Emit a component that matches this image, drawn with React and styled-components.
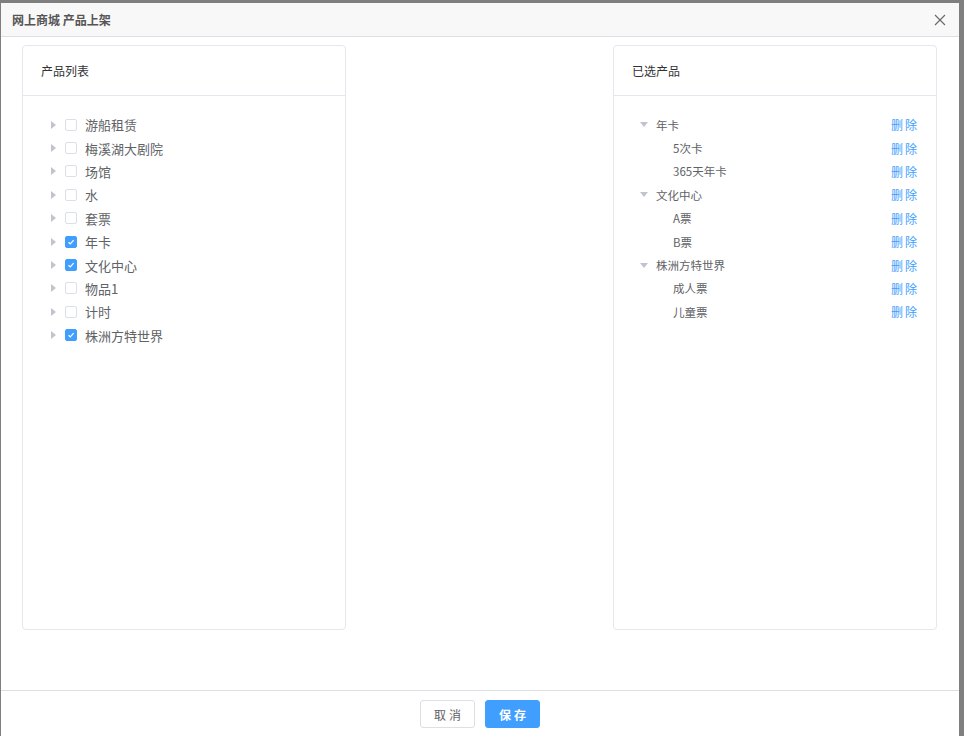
import React from "react";
import styled, { createGlobalStyle } from "styled-components";

const GlobalStyle = createGlobalStyle`
  html, body {
    margin: 0;
    padding: 0;
    background: #7f7f7f;
    overflow: hidden;
  }
  body {
    font-family: "Noto Sans CJK SC", "Noto Sans", "Liberation Sans", sans-serif;
  }
`;

const Overlay = styled.div`
  width: 964px;
  height: 736px;
  background: #7f7f7f;
  padding: 3px 0 0 1px;
  box-sizing: border-box;
  overflow: hidden;
`;

const Dialog = styled.div`
  width: 958px;
  height: 760px;
  background: #fff;
  display: flex;
  flex-direction: column;
`;

const Header = styled.div`
  height: 33px;
  flex: none;
  background: #f8f8f9;
  border-bottom: 1px solid #dcdfe6;
  display: flex;
  align-items: center;
  justify-content: space-between;
  padding: 0 12px 0 11px;
`;

const Title = styled.div`
  font-size: 12px;
  font-weight: bold;
  color: #555;
`;

const Close = styled.div`
  width: 12px;
  height: 12px;
  display: flex;
  margin-right: 1px;
  margin-top: 1px;
`;

const Body = styled.div`
  height: 653px;
  flex: none;
  box-sizing: border-box;
  padding: 8px 22px 0 21px;
  display: flex;
  justify-content: space-between;
  align-items: flex-start;
`;

const Panel = styled.div`
  width: 324px;
  height: 585px;
  box-sizing: border-box;
  border: 1px solid #e4e7ed;
  border-radius: 4px;
  display: flex;
  flex-direction: column;
`;

const PanelHead = styled.div`
  height: 49px;
  flex: none;
  border-bottom: 1px solid #e4e7ed;
  display: flex;
  align-items: center;
  padding-left: 18px;
  font-size: 12px;
  color: #333;
`;

const TreeList = styled.div`
  padding: 17px ${(p) => p.$right || 0}px 0 ${(p) => p.$left}px;
  display: flex;
  flex-direction: column;
`;

const Row = styled.div`
  height: 23.4px;
  display: flex;
  align-items: center;
  color: #606266;
  font-size: ${(p) => p.$size}px;
  padding-left: ${(p) => p.$indent || 0}px;
`;

const Caret = styled.span`
  width: 0;
  height: 0;
  border-style: solid;
  flex: none;
  ${(p) =>
    p.$open
      ? `border-width: 5px 4px 0 4px; border-color: #c0c4cc transparent transparent transparent; margin-right: 8px;`
      : `border-width: 4px 0 4px 5px; border-color: transparent transparent transparent #c0c4cc; margin-right: 9px;`}
`;

const Check = styled.span`
  width: 12px;
  height: 12px;
  box-sizing: border-box;
  border-radius: 2px;
  flex: none;
  margin-right: 8px;
  border: 1px solid ${(p) => (p.$on ? "#409eff" : "#dcdfe6")};
  background: ${(p) => (p.$on ? "#409eff" : "#fff")};
  display: flex;
  align-items: center;
  justify-content: center;
`;

const Label = styled.span`
  flex: 1;
  white-space: nowrap;
`;

const Remove = styled.span`
  color: #409eff;
  font-size: 12px;
  letter-spacing: 2px;
  margin-right: -2px;
`;

const Footer = styled.div`
  flex: 1;
  border-top: 1px solid #dcdfe6;
  display: flex;
  justify-content: center;
  align-items: flex-start;
  gap: 10px;
  padding-top: 9px;
`;

const Button = styled.button`
  width: 55px;
  height: 28px;
  box-sizing: border-box;
  border-radius: 3px;
  font-family: inherit;
  font-size: 12px;
  letter-spacing: 3px;
  text-indent: 3px;
  padding: 0;
  border: 1px solid ${(p) => (p.$primary ? "#409eff" : "#dcdfe6")};
  background: ${(p) => (p.$primary ? "#409eff" : "#fff")};
  color: ${(p) => (p.$primary ? "#fff" : "#606266")};
  font-weight: ${(p) => (p.$primary ? "bold" : "normal")};
`;

const products = [
  ["游船租赁", false],
  ["梅溪湖大剧院", false],
  ["场馆", false],
  ["水", false],
  ["套票", false],
  ["年卡", true],
  ["文化中心", true],
  ["物品1", false],
  ["计时", false],
  ["株洲方特世界", true],
];

const selected = [
  { name: "年卡", children: ["5次卡", "365天年卡"] },
  { name: "文化中心", children: ["A票", "B票"] },
  { name: "株洲方特世界", children: ["成人票", "儿童票"] },
];

const Tick = () => (
  <svg width="8" height="8" viewBox="0 0 8 8">
    <path d="M1.5 4.2 L3.3 5.9 L6.6 2.2" fill="none" stroke="#fff" strokeWidth="1.2" />
  </svg>
);

const App = () => {
  return (
    <Overlay>
      <GlobalStyle />
      <Dialog>
        <Header>
          <Title>网上商城 产品上架</Title>
          <Close>
            <svg width="12" height="12" viewBox="0 0 12 12">
              <path d="M1 1 L11 11 M11 1 L1 11" stroke="#6a6a6a" strokeWidth="1.2" />
            </svg>
          </Close>
        </Header>
        <Body>
          <Panel>
            <PanelHead>产品列表</PanelHead>
            <TreeList $left={28}>
              {products.map(([name, on]) => (
                <Row key={name} $size={13}>
                  <Caret />
                  <Check $on={on}>{on && <Tick />}</Check>
                  <Label>{name}</Label>
                </Row>
              ))}
            </TreeList>
          </Panel>
          <Panel>
            <PanelHead>已选产品</PanelHead>
            <TreeList $left={26} $right={19}>
              {selected.map((g) => (
                <React.Fragment key={g.name}>
                  <Row $size={11.5}>
                    <Caret $open />
                    <Label>{g.name}</Label>
                    <Remove>删除</Remove>
                  </Row>
                  {g.children.map((c) => (
                    <Row key={c} $size={11.5} $indent={33}>
                      <Label>{c}</Label>
                      <Remove>删除</Remove>
                    </Row>
                  ))}
                </React.Fragment>
              ))}
            </TreeList>
          </Panel>
        </Body>
        <Footer>
          <Button>取消</Button>
          <Button $primary>保存</Button>
        </Footer>
      </Dialog>
    </Overlay>
  );
};

export default App;
